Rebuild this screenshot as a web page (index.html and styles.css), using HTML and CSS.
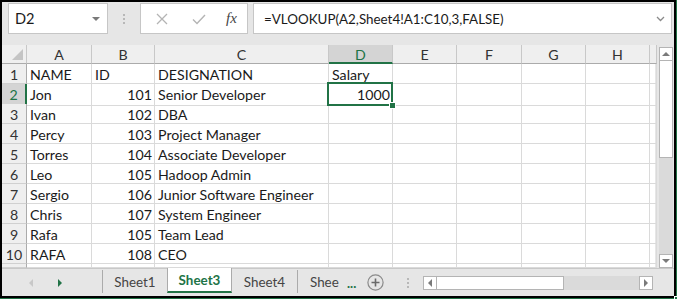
FILE: index.html
```html
<!DOCTYPE html>
<html>
<head>
  <title>Sheet3 - VLOOKUP</title>
  <link rel="stylesheet" href="styles.css">
</head>
<body>

<div class="window">

  <div class="formula-bar">
    <div class="name-box">
      <span>D2</span>
      <span class="caret"></span>
    </div>
    <div class="grip"><i></i><i></i><i></i></div>
    <div class="fx-buttons">
      <svg width="12" height="12" viewBox="0 0 12 12"><path d="M1 1L11 11M11 1L1 11" stroke="#b4b4b4" stroke-width="1.3" fill="none"/></svg>
      <svg width="14" height="12" viewBox="0 0 14 12"><path d="M1 6.5L5 10.5L13 2" stroke="#b4b4b4" stroke-width="1.4" fill="none"/></svg>
      <span class="fx">fx</span>
    </div>
    <div class="formula-input">
      <span>=VLOOKUP(A2,Sheet4!A1:C10,3,FALSE)</span>
      <svg width="9" height="6" viewBox="0 0 9 6"><path d="M1 1L4.5 4.5L8 1" stroke="#8a8a8a" stroke-width="1.3" fill="none"/></svg>
    </div>
  </div>

  <div class="main">
    <div class="sheet">
      <div class="row head">
        <div class="corner"><span class="tri"></span></div>
        <div>A</div><div>B</div><div>C</div><div class="sel">D</div><div>E</div><div>F</div><div>G</div><div>H</div><div></div>
      </div>
      <div class="row">
        <div class="num">1</div>
        <div>NAME</div><div>ID</div><div>DESIGNATION</div><div>Salary</div><div></div><div></div><div></div><div></div><div></div>
      </div>
      <div class="row">
        <div class="num sel">2</div>
        <div>Jon</div><div class="r">101</div><div>Senior Developer</div><div class="r active">1000</div><div></div><div></div><div></div><div></div><div></div>
      </div>
      <div class="row">
        <div class="num">3</div>
        <div>Ivan</div><div class="r">102</div><div>DBA</div><div></div><div></div><div></div><div></div><div></div><div></div>
      </div>
      <div class="row">
        <div class="num">4</div>
        <div>Percy</div><div class="r">103</div><div>Project Manager</div><div></div><div></div><div></div><div></div><div></div><div></div>
      </div>
      <div class="row">
        <div class="num">5</div>
        <div>Torres</div><div class="r">104</div><div>Associate Developer</div><div></div><div></div><div></div><div></div><div></div><div></div>
      </div>
      <div class="row">
        <div class="num">6</div>
        <div>Leo</div><div class="r">105</div><div>Hadoop Admin</div><div></div><div></div><div></div><div></div><div></div><div></div>
      </div>
      <div class="row">
        <div class="num">7</div>
        <div>Sergio</div><div class="r">106</div><div>Junior Software Engineer</div><div></div><div></div><div></div><div></div><div></div><div></div>
      </div>
      <div class="row">
        <div class="num">8</div>
        <div>Chris</div><div class="r">107</div><div>System Engineer</div><div></div><div></div><div></div><div></div><div></div><div></div>
      </div>
      <div class="row">
        <div class="num">9</div>
        <div>Rafa</div><div class="r">105</div><div>Team Lead</div><div></div><div></div><div></div><div></div><div></div><div></div>
      </div>
      <div class="row">
        <div class="num">10</div>
        <div>RAFA</div><div class="r">108</div><div>CEO</div><div></div><div></div><div></div><div></div><div></div><div></div>
      </div>
      <div class="row part">
        <div class="num"></div>
        <div></div><div></div><div></div><div></div><div></div><div></div><div></div><div></div><div></div>
      </div>
    </div>

    <div class="vscroll">
      <div class="sb-btn"><span class="arr up"></span></div>
      <div class="sb-thumb"></div>
      <div class="sb-track"></div>
      <div class="sb-btn"><span class="arr down"></span></div>
    </div>
  </div>

  <div class="tabbar">
    <div class="nav">
      <span class="arr left off"></span>
      <span class="arr right on"></span>
    </div>
    <div class="tab">Sheet1</div>
    <div class="tab active">Sheet3</div>
    <div class="tab">Sheet4</div>
    <div class="tab cut">Shee</div>
    <div class="more">...</div>
    <div class="add">
      <svg width="17" height="17" viewBox="0 0 17 17"><circle cx="8.5" cy="8.5" r="7.6" stroke="#8a8a8a" stroke-width="1.2" fill="none"/><path d="M8.5 4.5V12.5M4.5 8.5H12.5" stroke="#6a6a6a" stroke-width="1.6"/></svg>
    </div>
    <div class="grip small"><i></i><i></i><i></i></div>
    <div class="hscroll">
      <div class="sb-btn"><span class="arr left"></span></div>
      <div class="sb-thumb"></div>
      <div class="sb-track"></div>
      <div class="sb-btn"><span class="arr right"></span></div>
    </div>
  </div>

</div>

</body>
</html>
```

FILE: styles.css
```css
body {
  margin: 0;
  background: #000;
}

.window {
  width: 672px;
  height: 294px;
  border: solid #000;
  border-width: 2px 3px 3px 2px;
  background: #e6e6e6;
  display: flex;
  flex-direction: column;
  font-family: Lato, "Liberation Sans", sans-serif;
  font-size: 14.2px;
  color: #1a1a1a;
  overflow: hidden;
}

/* formula bar */

.formula-bar {
  height: 43px;
  flex: none;
  display: flex;
  align-items: flex-start;
  padding: 1px 0 0 6px;
  box-sizing: border-box;
}

.name-box {
  width: 100px;
  height: 31px;
  box-sizing: border-box;
  background: #fff;
  border: 1px solid #c6c6c6;
  display: flex;
  align-items: center;
  justify-content: space-between;
  padding: 0 7px 0 6px;
  font-size: 14.6px;
}

.caret {
  width: 0;
  height: 0;
  border-left: 4px solid transparent;
  border-right: 4px solid transparent;
  border-top: 4px solid #7a7a7a;
}

.grip {
  width: 32px;
  height: 31px;
  display: flex;
  flex-direction: column;
  align-items: center;
  justify-content: center;
  gap: 2px;
}

.grip i {
  width: 2px;
  height: 2px;
  background: #b8b8b8;
}

.fx-buttons {
  width: 108px;
  height: 31px;
  box-sizing: border-box;
  background: #fff;
  border: 1px solid #c6c6c6;
  display: flex;
  align-items: center;
  padding: 0 0 0 15px;
  gap: 24px;
}

.fx {
  font-family: "Liberation Serif", serif;
  font-style: italic;
  font-size: 15px;
  color: #444;
  margin-left: -4px;
}

.formula-input {
  width: 419px;
  height: 31px;
  margin-left: 5px;
  box-sizing: border-box;
  background: #fff;
  border: 1px solid #c6c6c6;
  display: flex;
  align-items: center;
  justify-content: space-between;
  padding: 0 6px 0 10px;
  font-size: 13.4px;
}

/* grid */

.main {
  height: 223px;
  flex: none;
  display: flex;
}

.sheet {
  width: 653px;
  background: #fff;
}

.row {
  display: grid;
  grid-template-columns: 25px 65px 63px 174px 64px 64px 65px 64px 64px 5px;
  height: 20px;
}

.row > div {
  box-sizing: border-box;
  border-right: 1px solid #dadada;
  border-bottom: 1px solid #dadada;
  line-height: 20px;
  padding: 1px 3px 0;
  white-space: nowrap;
  overflow: hidden;
}

.row > .r {
  text-align: right;
  padding-right: 2px;
}

.row.head {
  height: 19px;
}

.row.head > div {
  background: #efefef;
  border-right-color: #c8c8c8;
  border-bottom-color: #ababab;
  text-align: center;
  line-height: 18px;
  padding-top: 1px;
  color: #333;
}

.row.head > .sel {
  background: #d4d4d4;
  color: #217346;
  border-bottom: 2px solid #217346;
}

.corner {
  position: relative;
}

.tri {
  position: absolute;
  right: 3px;
  bottom: 3px;
  width: 0;
  height: 0;
  border-left: 11px solid transparent;
  border-bottom: 11px solid #c4c4c4;
}

.row > .num {
  background: #efefef;
  border-right-color: #ababab;
  border-bottom-color: #d0d0d0;
  text-align: center;
  color: #333;
  padding: 1px 0 0;
}

.row > .num.sel {
  background: #d4d4d4;
  color: #217346;
  border-right: 2px solid #217346;
}

.row.part {
  height: 4px;
}

.row > .active {
  position: relative;
  overflow: visible;
}

.active::before {
  content: "";
  position: absolute;
  left: -2px;
  top: -2px;
  right: -1px;
  bottom: -1px;
  border: 2px solid #217346;
}

.active::after {
  content: "";
  position: absolute;
  right: -4px;
  bottom: -4px;
  width: 5px;
  height: 5px;
  background: #217346;
  border: 1px solid #fff;
}

/* scrollbars */

.vscroll {
  width: 14px;
  margin: 2px 0 0 4px;
  display: flex;
  flex-direction: column;
}

.sb-btn {
  flex: none;
  width: 14px;
  height: 14px;
  box-sizing: border-box;
  border: 1px solid #b4b4b4;
  background: #fff;
  display: flex;
  align-items: center;
  justify-content: center;
}

.sb-thumb {
  height: 96px;
  background: #fff;
  border: 1px solid #b4b4b4;
  border-top: 0;
}

.sb-track {
  flex: 1;
  background: #dadada;
}

.arr {
  width: 0;
  height: 0;
}

.arr.up {
  border-left: 4px solid transparent;
  border-right: 4px solid transparent;
  border-bottom: 4px solid #7a7a7a;
}

.arr.down {
  border-left: 4px solid transparent;
  border-right: 4px solid transparent;
  border-top: 4px solid #7a7a7a;
}

.arr.left {
  border-top: 4px solid transparent;
  border-bottom: 4px solid transparent;
  border-right: 4px solid #7a7a7a;
}

.arr.right {
  border-top: 4px solid transparent;
  border-bottom: 4px solid transparent;
  border-left: 4px solid #7a7a7a;
}

/* sheet tabs */

.tabbar {
  height: 28px;
  flex: none;
  display: flex;
  align-items: stretch;
  border-top: 1px solid #c8c8c8;
  box-sizing: border-box;
}

.nav {
  width: 100px;
  display: flex;
  align-items: center;
  padding-left: 27px;
  gap: 25px;
  box-sizing: border-box;
}

.arr.left.off {
  border-right-color: #c8c8c8;
}

.arr.right.on {
  border-left-color: #217346;
}

.tab {
  width: 65px;
  box-sizing: border-box;
  border-left: 1px solid #ababab;
  margin: 1px 0 3px;
  display: flex;
  align-items: center;
  justify-content: center;
  font-size: 13.4px;
  color: #444;
}

.tab.active {
  background: #fff;
  color: #217346;
  font-weight: bold;
  margin-top: -1px;
  border-bottom: 2px solid #217346;
  border-right: 1px solid #ababab;
}

.tab.active + .tab {
  border-left: 0;
}

.tab.cut {
  width: 42px;
  justify-content: flex-start;
  padding-left: 12px;
}

.more {
  width: 24px;
  display: flex;
  align-items: center;
  padding-left: 8px;
  box-sizing: border-box;
  color: #217346;
  font-weight: bold;
  font-size: 13px;
}

.add {
  width: 26px;
  display: flex;
  align-items: center;
  padding-left: 4px;
}

.grip.small {
  width: 30px;
  height: auto;
}

.hscroll {
  width: 230px;
  height: 14px;
  margin-top: 7px;
  display: flex;
}

.hscroll .sb-btn {
  width: 14px;
}

.hscroll .sb-thumb {
  height: auto;
  width: 127px;
  border: 1px solid #b4b4b4;
  border-left: 0;
  box-sizing: border-box;
}
```
